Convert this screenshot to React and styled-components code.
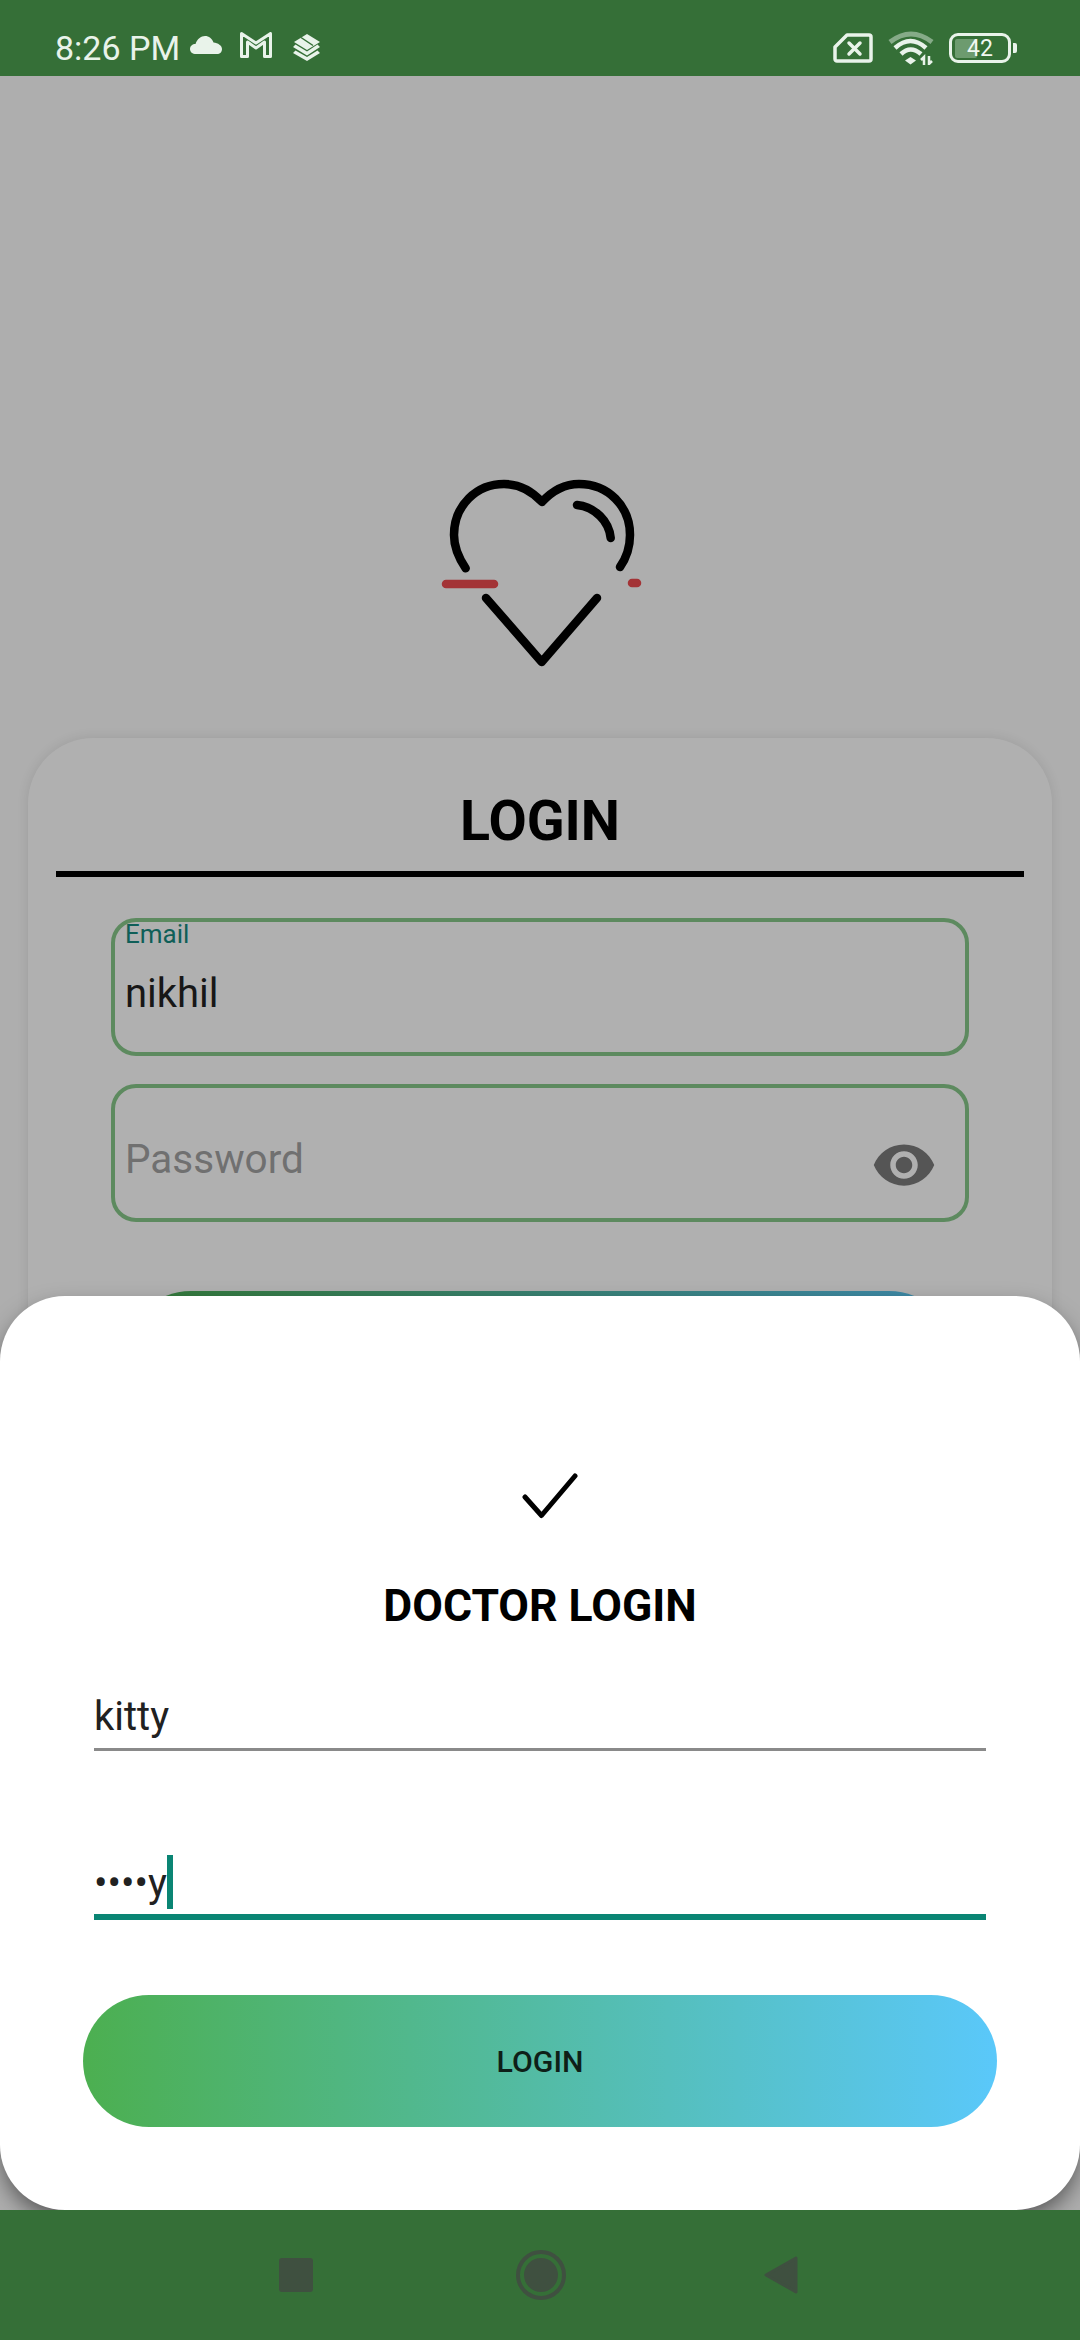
import React from "react";
import styled, { createGlobalStyle } from "styled-components";

const GlobalStyle = createGlobalStyle`
  html, body {
    margin: 0;
    padding: 0;
    background: #aeaeae;
  }
  * {
    box-sizing: border-box;
  }
`;

const Page = styled.div`
  display: flex;
  flex-direction: column;
  width: 1080px;
  height: 2340px;
  overflow: hidden;
  font-family: Roboto, "Liberation Sans", sans-serif;
`;

const StatusBar = styled.div`
  display: flex;
  align-items: center;
  justify-content: space-between;
  flex: 0 0 76px;
  padding: 20px 63px 0 55px;
  background: #356f37;
  color: #e9f3ea;
`;

const StatusGroup = styled.div`
  display: flex;
  align-items: center;
`;

const Time = styled.span`
  font-size: 34px;
  line-height: 40px;
  margin-right: 10px;
`;

const StatusIcon = styled.svg`
  display: block;
  flex: none;
  margin-left: ${(p) => p.$left || 0}px;
  margin-top: ${(p) => p.$top || 0}px;
`;

const Battery = styled.div`
  position: relative;
  display: flex;
  align-items: center;
  justify-content: center;
  width: 62px;
  height: 30px;
  margin-left: 15px;
  border: 3.5px solid #e9f3ea;
  border-radius: 9px;
  font-size: 23px;
  line-height: 23px;
  color: #f1f7f1;
`;

const BatteryFill = styled.div`
  position: absolute;
  left: 3px;
  top: 2.5px;
  bottom: 2.5px;
  width: 22px;
  border-radius: 2px;
  background: #6d9b6f;
`;

const BatteryText = styled.span`
  position: relative;
`;

const BatteryTip = styled.div`
  width: 4px;
  height: 10px;
  margin-left: 2px;
  border-radius: 0 2px 2px 0;
  background: #e9f3ea;
`;

const Backdrop = styled.div`
  position: relative;
  display: flex;
  flex-direction: column;
  align-items: center;
  flex: 0 0 2134px;
  padding-top: 394px;
  overflow: hidden;
  background: #aeaeae;
`;

const Logo = styled.svg`
  display: block;
  flex: none;
`;

const Card = styled.div`
  flex: none;
  width: 1024px;
  margin-top: 68px;
  padding-bottom: 120px;
  border-radius: 65px;
  background: #b0b0b0;
  box-shadow: 0 0 12px rgba(0, 0, 0, 0.1);
`;

const CardTitle = styled.h1`
  margin: 0;
  padding: 51px 0 16px;
  font-size: 55.5px;
  line-height: 66px;
  font-weight: 700;
  text-align: center;
  color: #000;
`;

const Divider = styled.div`
  height: 6px;
  margin: 0 28px;
  background: #000;
`;

const CardForm = styled.div`
  display: flex;
  flex-direction: column;
  gap: 28px;
  padding: 41px 83px 0;
`;

const Field = styled.div`
  height: 138px;
  padding-left: 10px;
  border: 4px solid #5d8a5f;
  border-radius: 25px;
`;

const PasswordField = styled(Field)`
  display: flex;
  align-items: flex-start;
  justify-content: space-between;
  padding-right: 28px;
`;

const FloatLabel = styled.div`
  font-size: 26px;
  line-height: 24px;
  color: #0f5f58;
`;

const FieldValue = styled.div`
  margin-top: 26px;
  font-size: 40px;
  line-height: 44px;
  color: #171717;
`;

const Placeholder = styled.div`
  margin-top: 49px;
  font-size: 40.5px;
  line-height: 44px;
  color: #707070;
`;

const EyeIcon = styled.svg`
  display: block;
  flex: none;
  margin-top: 44px;
  fill: #555;
`;

const BackButton = styled.div`
  height: 132px;
  margin: 41px 14px 0;
  border-radius: 66px;
  background: linear-gradient(90deg, #347937, #3e8aac);
`;

const Sheet = styled.div`
  position: absolute;
  left: 0;
  right: 0;
  bottom: 0;
  height: 914px;
  padding: 176px 83px 0;
  border-radius: 65px;
  background: #fff;
  box-shadow: 0 10px 22px -2px rgba(0, 0, 0, 0.5);
`;

const CheckIcon = styled.svg`
  display: block;
  margin-left: 437px;
`;

const SheetTitle = styled.h2`
  margin: 60px 0 0;
  font-size: 44.5px;
  line-height: 52px;
  font-weight: 700;
  text-align: center;
  color: #000;
`;

const InputRow = styled.div`
  display: flex;
  align-items: center;
  margin: ${(p) => p.$top}px 11px 0;
  padding-bottom: ${(p) => (p.$focused ? 8 : 9)}px;
  border-bottom: ${(p) => (p.$focused ? "6px solid #0a8574" : "3px solid #8a8a8a")};
  font-size: 40px;
  line-height: 44px;
  color: #212121;
`;

const Caret = styled.span`
  width: 6px;
  height: 54px;
  margin: -7px 0 -3px;
  background: #0a8574;
`;

const SheetButton = styled.div`
  display: flex;
  align-items: center;
  justify-content: center;
  height: 132px;
  margin-top: 75px;
  border-radius: 66px;
  background: linear-gradient(90deg, #4caf50, #5ac8fa);
  font-size: 30.25px;
  font-weight: 500;
  color: #0e1f18;
`;

const NavBar = styled.div`
  display: flex;
  align-items: center;
  flex: 0 0 130px;
  padding-left: 279px;
  background: #356f37;
`;

const NavIcon = styled.svg`
  display: block;
  flex: none;
  margin-left: ${(p) => p.$left || 0}px;
  fill: #3f5040;
`;

function App() {
  return (
    <Page>
      <GlobalStyle />
      <StatusBar>
        <StatusGroup>
          <Time>8:26 PM</Time>
          <StatusIcon width="32" height="18" viewBox="0 0 32 18" fill="#e9f3ea" $top={-7}>
            <path d="M6 18C2.5 18 0 16 0 13c0-3 2.5-5 5.5-5C7 3 11 0 15 0c4 0 7 2.5 8.5 6.5C28 7 32 9.5 32 13c0 3-2 5-5 5Z" />
          </StatusIcon>
          <StatusIcon width="32" height="26" viewBox="0 0 32 26" fill="none" stroke="#e9f3ea" strokeWidth="3" strokeLinejoin="round" $left={18} $top={-6}>
            <path d="M1.5 1.5 16 11 30.5 1.5V24.5H24.5V10L16 16 7.5 10V24.5H1.5Z" />
          </StatusIcon>
          <StatusIcon width="27" height="27" viewBox="0 0 27 27" fill="#e9f3ea" $left={21} $top={-2}>
            <path d="M14 0 27 8 14 16 1 8Z" />
            <path d="M8 3.5 20 11.5" stroke="#356f37" strokeWidth="1.5" />
            <path d="M2.5 10.5 14 17.5 24.5 10.5 27 13 14 21.5 0 13Z" />
            <path d="M2.5 16.5 14 23 24.5 16.5 27 19 14 27 0 19Z" />
          </StatusIcon>
        </StatusGroup>
        <StatusGroup>
          <StatusIcon width="40" height="30" viewBox="0 0 40 30" fill="none" stroke="#e9f3ea" strokeLinejoin="round" strokeLinecap="round" $top={-1}>
            <path d="M14 2H36a2 2 0 0 1 2 2V26a2 2 0 0 1-2 2H4a2 2 0 0 1-2-2V14Z" strokeWidth="3.5" />
            <path d="M16 10 27 21M27 10 16 21" strokeWidth="3.5" />
          </StatusIcon>
          <StatusIcon width="46" height="34" viewBox="0 0 46 34" fill="none" strokeLinecap="butt" $left={15}>
            <path d="M2 11Q23-5 44 11" stroke="#86ab88" strokeWidth="5" />
            <path d="M7 17Q22.5 3 38 17" stroke="#e9f3ea" strokeWidth="4.5" />
            <path d="M13 23Q22.5 14 33 23" stroke="#e9f3ea" strokeWidth="4.5" />
            <path d="M17 29.5 22.5 26 28 29.5 22.5 33.5Z" fill="#e9f3ea" />
            <path d="M36 34V26L33 29M41 25V33L44 30" stroke="#e9f3ea" strokeWidth="2.5" />
          </StatusIcon>
          <Battery>
            <BatteryFill />
            <BatteryText>42</BatteryText>
          </Battery>
          <BatteryTip />
        </StatusGroup>
      </StatusBar>

      <Backdrop>
        <Logo width="220" height="200" viewBox="430 470 220 200" fill="none" stroke="#000" strokeWidth="8.5" strokeLinecap="round" strokeLinejoin="round">
          <path d="M465.7 568.3C458 557 454 547 454 535C454 505 477 484 504 484C518 484 531 490 542 502C553 490 566 484 579 484C608 484 630 506 630 535C630 547 627 557 620 567" />
          <path d="M577 505C595 507 609 521 610.7 538" />
          <path d="M486 598 541.7 662 597 598" />
          <path d="M446 584H494" stroke="#a33336" />
          <path d="M632 583H637" stroke="#a33336" />
        </Logo>
        <Card>
          <CardTitle>LOGIN</CardTitle>
          <Divider />
          <CardForm>
            <Field>
              <FloatLabel>Email</FloatLabel>
              <FieldValue>nikhil</FieldValue>
            </Field>
            <PasswordField>
              <Placeholder>Password</Placeholder>
              <EyeIcon width="66" height="66" viewBox="0 0 24 24">
                <path d="M12 4.5C7 4.5 2.73 7.61 1 12c1.73 4.39 6 7.5 11 7.5s9.27-3.11 11-7.5c-1.73-4.39-6-7.5-11-7.5zM12 17c-2.76 0-5-2.24-5-5s2.24-5 5-5 5 2.24 5 5-2.24 5-5 5zm0-8c-1.66 0-3 1.34-3 3s1.34 3 3 3 3-1.34 3-3-1.34-3-3-3z" />
              </EyeIcon>
            </PasswordField>
            <BackButton />
          </CardForm>
        </Card>

        <Sheet>
          <CheckIcon width="58" height="48" viewBox="0 0 58 48" fill="none" stroke="#000" strokeWidth="5" strokeLinecap="round" strokeLinejoin="round">
            <path d="M5 25 21.5 43.5 55 4" />
          </CheckIcon>
          <SheetTitle>DOCTOR LOGIN</SheetTitle>
          <InputRow $top={63}>kitty</InputRow>
          <InputRow $top={111} $focused>
            ••••y
            <Caret />
          </InputRow>
          <SheetButton>LOGIN</SheetButton>
        </Sheet>
      </Backdrop>

      <NavBar>
        <NavIcon width="34" height="34" viewBox="0 0 34 34">
          <rect width="34" height="34" rx="3" />
        </NavIcon>
        <NavIcon width="50" height="50" viewBox="0 0 50 50" $left={203}>
          <circle cx="25" cy="25" r="17" />
          <circle cx="25" cy="25" r="23" fill="none" stroke="#3f5040" strokeWidth="4" />
        </NavIcon>
        <NavIcon width="34" height="38" viewBox="0 0 34 38" $left={198}>
          <path d="M32 2 2 19 32 36Z" stroke="#3f5040" strokeWidth="3" strokeLinejoin="round" />
        </NavIcon>
      </NavBar>
    </Page>
  );
}

export default App;
